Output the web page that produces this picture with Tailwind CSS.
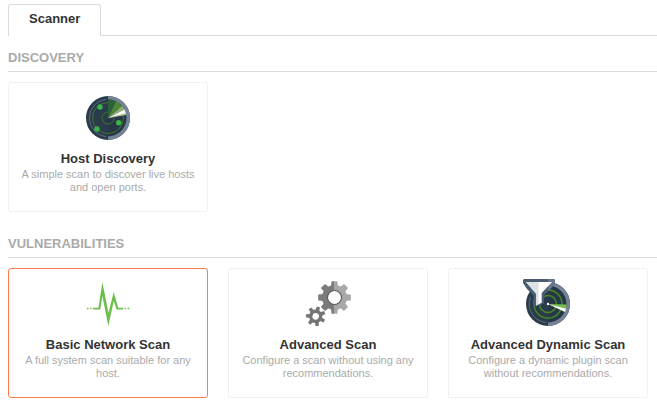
<!DOCTYPE html>
<html lang="en">
<head>
<meta charset="utf-8">
<meta name="viewport" content="width=device-width, initial-scale=1">
<title>Scan Templates</title>
<script src="https://cdn.jsdelivr.net/npm/@tailwindcss/browser@4"></script>
</head>
<body class="bg-white pt-1 pl-2 font-['Liberation_Sans',Arial,sans-serif] text-[#333]">
<nav class="flex" aria-label="Template type">
  <a href="#scanner" class="h-8 rounded-t-[3px] border border-b-0 border-[#dadada] px-5 pt-1.5 text-[13px] leading-4 font-bold">Scanner</a>
  <div class="flex-1 border-b border-[#dadada]"></div>
</nav>
<main id="scanner">
  <section class="pt-3.5">
    <h2 class="border-b border-[#dadada] pb-1.5 text-[13px] leading-[15px] font-bold text-[#aaa]">DISCOVERY</h2>
    <div class="flex flex-wrap gap-5 pt-2.5">
      <a href="#host-discovery" class="flex h-[130px] w-[200px] flex-col items-center rounded-[3px] border border-dotted border-[#e2e2e2] px-2.5 pt-[11px] text-center">
        <svg class="size-12" viewBox="0 0 48 48" aria-hidden="true">
          <circle cx="24" cy="24" r="22" fill="#2a3b4b"/>
          <path d="M24 2a22 22 0 0 1 0 44z" fill="#748398"/>
          <path d="M24 5.500a18.500 18.500 0 0 1 0 37z" fill="#263747"/>
          <path d="M22 5.500a18.600 18.600 0 0 0 0 37" fill="none" stroke="#71808d" stroke-width=".7"/>
          <circle cx="24" cy="24" r="15.500" fill="none" stroke="#447a2b" stroke-width=".9"/>
          <circle cx="24" cy="24" r="6" fill="none" stroke="#447a2b" stroke-width=".9"/>
          <path d="M24 24V5.500A18.500 18.500 0 0 1 32 7.300z" fill="#2b603b"/>
          <path d="M24 24L32 7.300A18.500 18.500 0 0 1 38 12z" fill="#4c8838"/>
          <path d="M24 24L38 12A18.500 18.500 0 0 1 40.500 15.500z" fill="#91ad70"/>
          <path d="M24 24L40.500 15.500A18.500 18.500 0 0 1 42 20z" fill="#fff"/>
          <path d="M24 24L42 19A18.500 18.500 0 0 1 42.400 21z" fill="#a9c58b"/>
          <g fill="#3bb54a"><circle cx="16" cy="13" r="2.700"/><circle cx="34.700" cy="28.700" r="2.700"/><circle cx="13" cy="35" r="2.700"/></g>
        </svg>
        <h3 class="mt-[9px] text-[13px] leading-4 font-bold">Host Discovery</h3>
        <p class="mt-px text-[11px] leading-[13px] text-[#aaa]">A simple scan to discover live hosts and open ports.</p>
      </a>
    </div>
  </section>
  <section class="pt-6">
    <h2 class="border-b border-[#dadada] pb-1.5 text-[13px] leading-[15px] font-bold text-[#aaa]">VULNERABILITIES</h2>
    <div class="flex flex-wrap gap-5 pt-2.5">
      <a href="#basic-network-scan" class="flex h-[130px] w-[200px] flex-col items-center rounded-[3px] border border-[#ff7c53] px-2.5 pt-[11px] text-center">
        <svg class="size-12" viewBox="0 0 48 48" fill="#6cbf4b" aria-hidden="true">
          <path d="M9 27.800H14.400L18.400 2.200L24.500 33L29.700 12L34.200 27.800H39V29.400H32.600L29.800 21L24.300 46L18.400 16L16.200 29.400H9z"/>
          <path d="M3 27.800h1.500v1.500H3zM6 27.800h1.500v1.500H6zM40.700 27.800h1.500v1.500h-1.500zM43.700 27.800h1.500v1.500h-1.500z"/>
        </svg>
        <h3 class="mt-[9px] text-[13px] leading-4 font-bold">Basic Network Scan</h3>
        <p class="mt-px text-[11px] leading-[13px] text-[#aaa]">A full system scan suitable for any host.</p>
      </a>
      <a href="#advanced-scan" class="flex h-[130px] w-[200px] flex-col items-center rounded-[3px] border border-dotted border-[#e2e2e2] px-2.5 pt-[11px] text-center">
        <svg class="size-12" viewBox="0 0 48 48" aria-hidden="true">
          <defs>
            <path id="tooth" d="M-3.600 -10L-2.900 -16.300H2.900L3.600 -10z"/>
            <path id="small-tooth" d="M-2 -5.500L-1.600 -9.800H1.600L2 -5.500z"/>
            <linearGradient id="steel" gradientUnits="userSpaceOnUse" x1="14" y1="0" x2="47" y2="0"><stop offset=".5" stop-color="#7b7b7b"/><stop offset=".5" stop-color="#a8a8a8"/></linearGradient>
            <mask id="gear" maskUnits="userSpaceOnUse" x="12" y="0" width="38" height="36">
              <g transform="translate(30.500 17.500)" fill="#fff">
                <circle r="12.500"/>
                <use href="#tooth"/><use href="#tooth" transform="rotate(45)"/><use href="#tooth" transform="rotate(90)"/><use href="#tooth" transform="rotate(135)"/><use href="#tooth" transform="rotate(180)"/><use href="#tooth" transform="rotate(225)"/><use href="#tooth" transform="rotate(270)"/><use href="#tooth" transform="rotate(315)"/>
              </g>
            </mask>
          </defs>
          <path d="M12 0h38v36H12z" fill="url(#steel)" mask="url(#gear)"/>
          <circle cx="30.500" cy="17.500" r="7" fill="#fff" stroke="#555759" stroke-width="1.100"/>
          <g transform="translate(11.700 36.300) rotate(16)" fill="#757575">
            <circle r="6.700"/>
            <use href="#small-tooth"/><use href="#small-tooth" transform="rotate(51.430)"/><use href="#small-tooth" transform="rotate(102.860)"/><use href="#small-tooth" transform="rotate(154.290)"/><use href="#small-tooth" transform="rotate(205.710)"/><use href="#small-tooth" transform="rotate(257.140)"/><use href="#small-tooth" transform="rotate(308.570)"/>
            <circle r="3.300" fill="#fff"/>
          </g>
        </svg>
        <h3 class="mt-[9px] text-[13px] leading-4 font-bold">Advanced Scan</h3>
        <p class="mt-px text-[11px] leading-[13px] text-[#aaa]">Configure a scan without using any recommendations.</p>
      </a>
      <a href="#advanced-dynamic-scan" class="flex h-[130px] w-[200px] flex-col items-center rounded-[3px] border border-dotted border-[#e2e2e2] px-2.5 pt-[11px] text-center">
        <svg class="size-12 overflow-visible" viewBox="0 0 48 48" aria-hidden="true">
          <circle cx="24" cy="24" r="22" fill="#2a3b4b"/>
          <path d="M24 2a22 22 0 0 1 0 44z" fill="#748398"/>
          <path d="M24 5.500a18.500 18.500 0 0 1 0 37z" fill="#263747"/>
          <path d="M6.500 17a18.600 18.600 0 0 0 16 25.500" fill="none" stroke="#71808d" stroke-width=".7"/>
          <g fill="none" stroke="#468a26" stroke-width="1.400"><circle cx="24" cy="24" r="14"/><circle cx="24" cy="24" r="8.500"/></g>
          <path d="M24 24L42.500 24.500A18.500 18.500 0 0 1 42 29.300z" fill="#79bd4c"/>
          <path d="M24 24L42 28.800A18.500 18.500 0 0 1 41 32z" fill="#fff"/>
          <path d="M0 -1H30L31 0V4L20 15.500V23.500L9.500 27V15.500L3 9L-1 3V0z" fill="#4b5d70"/>
          <path d="M24 -1H30L31 0V4L24 11.200z" fill="#69798d"/>
          <path d="M2 2H28L17.700 13V22.700L12.300 25.500V14z" fill="#fff"/>
          <path d="M2 2H14.500V24.300L12.300 25.500V14z" fill="#dde2e3"/>
          <circle cx="24" cy="24" r="1.200" fill="#fff"/>
        </svg>
        <h3 class="mt-[9px] text-[13px] leading-4 font-bold">Advanced Dynamic Scan</h3>
        <p class="mt-px text-[11px] leading-[13px] text-[#aaa]">Configure a dynamic plugin scan without recommendations.</p>
      </a>
    </div>
  </section>
</main>
</body>
</html>
